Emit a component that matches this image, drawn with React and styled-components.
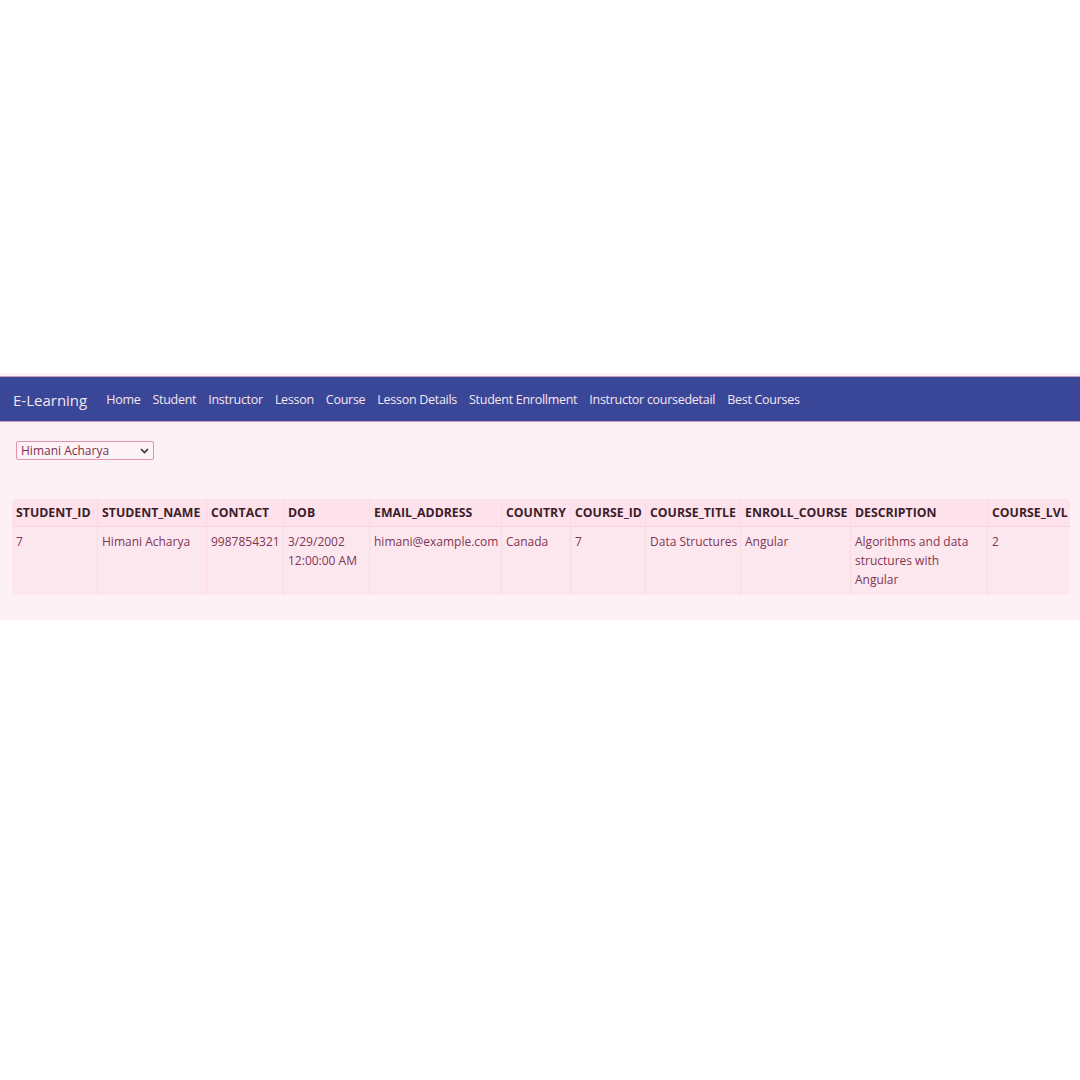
import React from "react";
import styled, { createGlobalStyle } from "styled-components";

const Global = createGlobalStyle`
  html, body { margin: 0; padding: 0; background: #ffffff; }
  body { font-family: "Open Sans", "Noto Sans", sans-serif; }
`;

const Page = styled.div`
  padding-top: 373px;
  width: 1080px;
`;

const Section = styled.div`
  background: #fdf1f5;
  padding-top: 3px;
  padding-bottom: 25px;
`;

const Nav = styled.nav`
  background: #3a4799;
  border-top: 1px solid #c79bbd;
  border-bottom: 1px solid #c79bbd;
  height: 43px;
  display: flex;
  align-items: center;
  padding: 1px 13px 0;
  box-sizing: content-box;
  gap: 12px;
`;

const Brand = styled.span`
  color: #f2e4ee;
  font-size: 15px;
  margin-right: 7px;
`;

const NavLink = styled.a`
  color: #f6e6f0;
  font-size: 12.5px;
  text-decoration: none;
  letter-spacing: -0.28px;
`;

const Content = styled.div`
  padding: 19px 12px 0;
`;

const Select = styled.div`
  margin-left: 4px;
  width: 138px;
  height: 19px;
  box-sizing: border-box;
  border: 1px solid #e393ad;
  border-radius: 2px;
  background: #fdf3f6;
  display: flex;
  align-items: center;
  justify-content: space-between;
  padding: 0 4px;
  color: #7b2f4e;
  font-size: 12px;
`;

const Chevron = styled.svg`
  width: 9px;
  height: 6px;
`;

const Table = styled.table`
  margin-top: 39px;
  width: 1058px;
  border-collapse: separate;
  border-spacing: 0;
  border-radius: 5px;
  overflow: hidden;
  background: #fde7ef;
  table-layout: fixed;
`;

const Th = styled.th`
  background: #fde2eb;
  color: #3b1d2c;
  font-size: 12.3px;
  font-weight: 700;
  text-align: left;
  padding: 5px 4px;
  height: 17px;
  white-space: nowrap;
  border-left: 1px solid #fbd8e3;
  border-bottom: 1px solid #fbd3df;
  &:first-child { border-left: none; }
`;

const Td = styled.td`
  color: #7d3654;
  font-size: 12px;
  vertical-align: top;
  padding: 5px 4px 6px;
  line-height: 19px;
  white-space: ${(p) => (p.$wrap ? "normal" : "nowrap")};
  border-left: 1px solid #fbd8e3;
  height: 56px;
  &:first-child { border-left: none; }
`;

const cols = [85, 109, 77, 86, 132, 69, 75, 95, 110, 137, 83];
const heads = ["STUDENT_ID", "STUDENT_NAME", "CONTACT", "DOB", "EMAIL_ADDRESS", "COUNTRY", "COURSE_ID", "COURSE_TITLE", "ENROLL_COURSE", "DESCRIPTION", "COURSE_LVL"];
const row = ["7", "Himani Acharya", "9987854321", "3/29/2002 12:00:00 AM", "himani@example.com", "Canada", "7", "Data Structures", "Angular", "Algorithms and data structures with Angular", "2"];
const wrapCols = [3, 9];

const links = ["Home", "Student", "Instructor", "Lesson", "Course", "Lesson Details", "Student Enrollment", "Instructor coursedetail", "Best Courses"];

export default function App() {
  return (
    <Page>
      <Global />
      <Section>
        <Nav>
          <Brand>E-Learning</Brand>
          {links.map((l) => (
            <NavLink key={l} href="#">{l}</NavLink>
          ))}
        </Nav>
        <Content>
          <Select>
            <span>Himani Acharya</span>
            <Chevron viewBox="0 0 9 6">
              <path d="M1 1 L4.5 4.5 L8 1" fill="none" stroke="#333" strokeWidth="1.6" />
            </Chevron>
          </Select>
          <Table>
            <colgroup>
              {cols.map((w, i) => (
                <col key={i} style={{ width: w }} />
              ))}
            </colgroup>
            <thead>
              <tr>
                {heads.map((h) => (
                  <Th key={h}>{h}</Th>
                ))}
              </tr>
            </thead>
            <tbody>
              <tr>
                {row.map((c, i) => (
                  <Td key={i} $wrap={wrapCols.includes(i)}>{c}</Td>
                ))}
              </tr>
            </tbody>
          </Table>
        </Content>
      </Section>
    </Page>
  );
}
